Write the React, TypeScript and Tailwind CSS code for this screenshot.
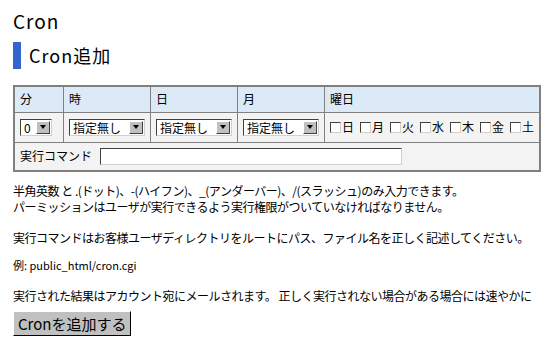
import React from 'react';

const font = { fontFamily: '"MS PGothic", "Noto Sans CJK JP", sans-serif' };

const FakeSelect = ({ value, width }: { value: string; width: string }) => (
  <div className={`flex h-[17px] items-stretch bg-white border border-t-[#404040] border-l-[#404040] border-b-[#d4d0c8] border-r-[#d4d0c8] ${width}`}>
    <span className="flex-1 pl-[3px] text-[12px] leading-[15px] whitespace-nowrap">{value}</span>
    <span className="w-[14px] m-[1px] bg-[#c0c0c0] border border-t-white border-l-white border-b-[#404040] border-r-[#404040] flex items-center justify-center">
      <span className="w-0 h-0 border-l-[3px] border-r-[3px] border-t-[4px] border-l-transparent border-r-transparent border-t-black" />
    </span>
  </div>
);

const Box = () => (
  <span className="inline-block w-[11px] h-[11px] bg-white border border-t-[#404040] border-l-[#404040] border-b-[#d4d0c8] border-r-[#d4d0c8] mr-[1px]" />
);

const days = ['日', '月', '火', '水', '木', '金', '土'];

export default function App() {
  return (
    <div className="w-[546px] h-[345px] bg-white text-black px-[13px] overflow-hidden" style={font}>
      <h1 className="pt-[10px] text-[19px] leading-[22px] tracking-[1px]">Cron</h1>
      <div className="mt-[10px] flex items-center h-[27px]">
        <span className="w-[8px] h-[27px] bg-[#3366cc]" />
        <h2 className="ml-[8px] text-[18px] tracking-[1px]">Cron追加</h2>
      </div>

      <table className="mt-[16px] w-[528px] border-collapse border-2 border-[#808080] text-[12px]">
        <tbody>
          <tr className="bg-[#dce9f7] h-[26px]">
            <td className="w-[52px] border border-[#808080] px-[5px] align-middle">分</td>
            <td className="w-[86px] border border-[#808080] px-[5px]">時</td>
            <td className="w-[86px] border border-[#808080] px-[5px]">日</td>
            <td className="w-[86px] border border-[#808080] px-[5px]">月</td>
            <td className="border border-[#808080] px-[5px]">曜日</td>
          </tr>
          <tr className="bg-[#f3f3f3] h-[30px]">
            <td className="border border-[#808080] px-[5px]">
              <FakeSelect value="0" width="w-[32px]" />
            </td>
            {[0, 1, 2].map((i) => (
              <td key={i} className="border border-[#808080] px-[5px]">
                <FakeSelect value="指定無し" width="w-[76px]" />
              </td>
            ))}
            <td className="border border-[#808080] px-[5px]">
              <div className="flex items-center gap-[6px] whitespace-nowrap">
                {days.map((d) => (
                  <span key={d} className="flex items-center">
                    <Box />
                    {d}
                  </span>
                ))}
              </div>
            </td>
          </tr>
          <tr className="bg-[#f3f3f3] h-[29px]">
            <td colSpan={5} className="border border-[#808080] px-[5px]">
              <div className="flex items-center gap-[8px]">
                <span>実行コマンド</span>
                <span className="w-[302px] h-[17px] bg-white border border-t-[#404040] border-l-[#404040] border-b-[#d4d0c8] border-r-[#d4d0c8]" />
              </div>
            </td>
          </tr>
        </tbody>
      </table>

      <div className="mt-[11px] text-[12px] leading-[16px] whitespace-nowrap tracking-[-0.5px]">
        <p>半角英数 と .(ドット)、-(ハイフン)、_(アンダーバー)、/(スラッシュ)のみ入力できます。</p>
        <p>パーミッションはユーザが実行できるよう実行権限がついていなければなりません。</p>
        <p className="mt-[15px]">実行コマンドはお客様ユーザディレクトリをルートにパス、ファイル名を正しく記述してください。</p>
        <p className="mt-[11px] text-[11px] tracking-normal">例: public_html/cron.cgi</p>
        <p className="mt-[15px]">実行された結果はアカウント宛にメールされます。 正しく実行されない場合がある場合には速やかに</p>
      </div>

      <button className="mt-[7px] h-[25px] px-[4px] bg-[#c0c0c0] border border-t-white border-l-white border-b-black border-r-black text-[15px] leading-[20px]">
        Cronを追加する
      </button>
    </div>
  );
}
